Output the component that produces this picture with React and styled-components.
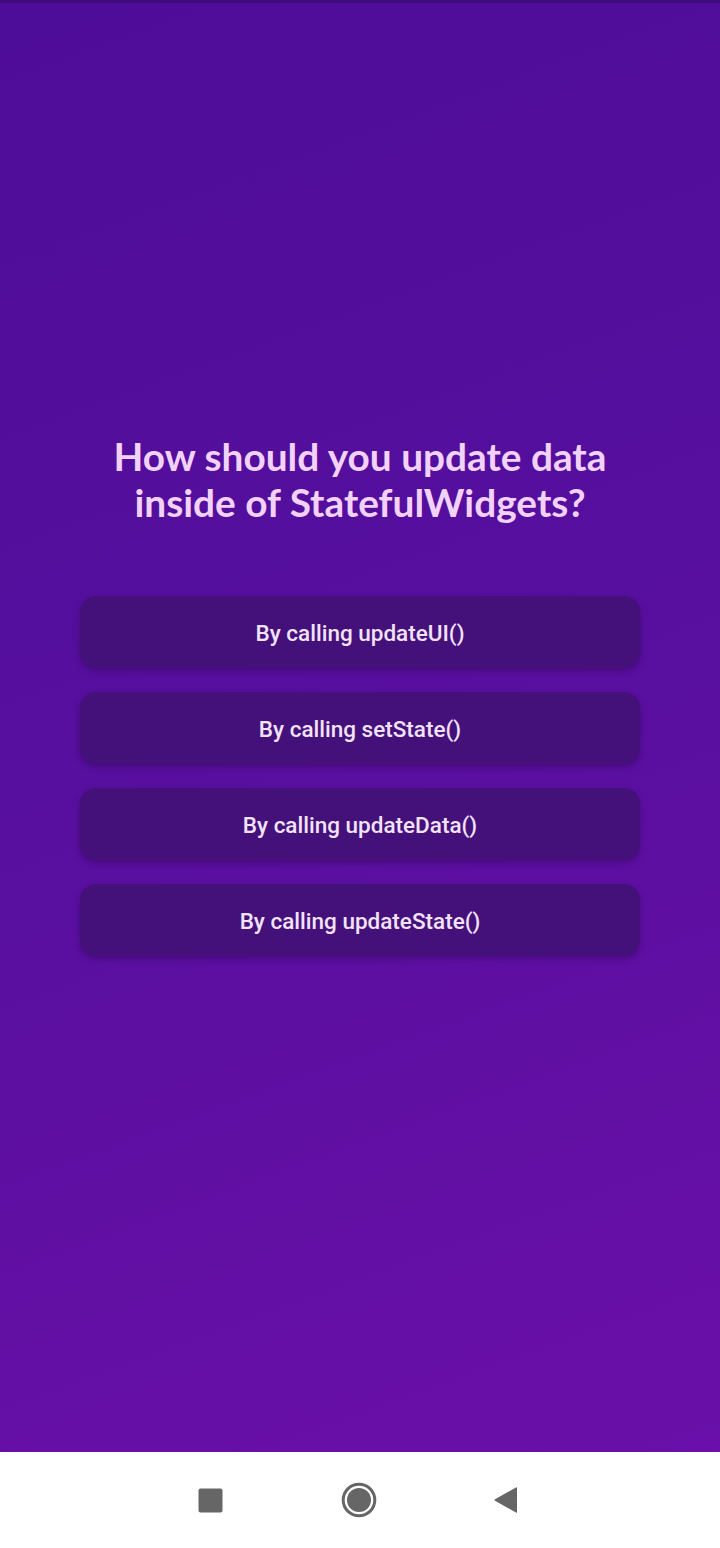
import React from "react";
import styled, { createGlobalStyle } from "styled-components";

const Global = createGlobalStyle`
  html, body { margin: 0; padding: 0; }
  body { width: 720px; height: 1548px; overflow: hidden; font-family: Roboto, "Noto Sans", sans-serif; }
`;

const Screen = styled.div`
  width: 720px;
  height: 1548px;
  display: flex;
  flex-direction: column;
`;

const Content = styled.main`
  flex: 1;
  background: linear-gradient(160deg, #4e0d98 0%, #560f9e 45%, #6a0fa9 100%);
  border-top: 3px solid #3e0c78;
  display: flex;
  flex-direction: column;
  align-items: center;
  padding-top: 430px;
  box-sizing: border-box;
`;

const Title = styled.h1`
  margin: 0 0 71px;
  font-family: Lato, "Open Sans", sans-serif;
  font-weight: 700;
  font-size: 38.8px;
  line-height: 46px;
  color: #f2d2fa;
  text-align: center;
  width: 600px;
`;

const Answers = styled.div`
  display: flex;
  flex-direction: column;
  gap: 24px;
  width: 560px;
`;

const Answer = styled.button`
  height: 72px;
  border: none;
  border-radius: 16px;
  background: #44117a;
  color: #f2e2fa;
  font-family: Roboto, sans-serif;
  font-weight: 500;
  font-size: 22.5px;
  padding-top: 2px;
  box-shadow: 0 3px 6px rgba(40, 0, 70, 0.35);
  cursor: pointer;
`;

const NavBar = styled.nav`
  height: 96px;
  background: #fff;
  display: flex;
  align-items: center;
  padding-left: 198px;
  box-sizing: border-box;
`;

const NavIcon = styled.div`
  display: flex;
  align-items: center;
  margin-left: ${(p) => p.$offset || 0}px;
`;

const answers = [
  "By calling updateUI()",
  "By calling setState()",
  "By calling updateData()",
  "By calling updateState()",
];

export default function App() {
  return (
    <Screen>
      <Global />
      <Content>
        <Title>
          How should you update data
          <br />
          inside of StatefulWidgets?
        </Title>
        <Answers>
          {answers.map((a) => (
            <Answer key={a}>{a}</Answer>
          ))}
        </Answers>
      </Content>
      <NavBar>
        <NavIcon>
          <svg width="25" height="25" viewBox="0 0 25 25">
            <rect x="0.5" y="0.5" width="24" height="24" rx="2" fill="#666" />
          </svg>
        </NavIcon>
        <NavIcon $offset={118}>
          <svg width="36" height="36" viewBox="0 0 36 36">
            <circle cx="18" cy="18" r="15.8" fill="none" stroke="#666" strokeWidth="3" />
            <circle cx="18" cy="18" r="12" fill="#666" />
          </svg>
        </NavIcon>
        <NavIcon $offset={116}>
          <svg width="26" height="28" viewBox="0 0 26 28">
            <path d="M24 1.5 L24 26.5 Q24 27 23 26.5 L2 14.8 Q1 14 2 13.2 L23 1.5 Q24 1 24 1.5 Z" fill="#666" />
          </svg>
        </NavIcon>
      </NavBar>
    </Screen>
  );
}
